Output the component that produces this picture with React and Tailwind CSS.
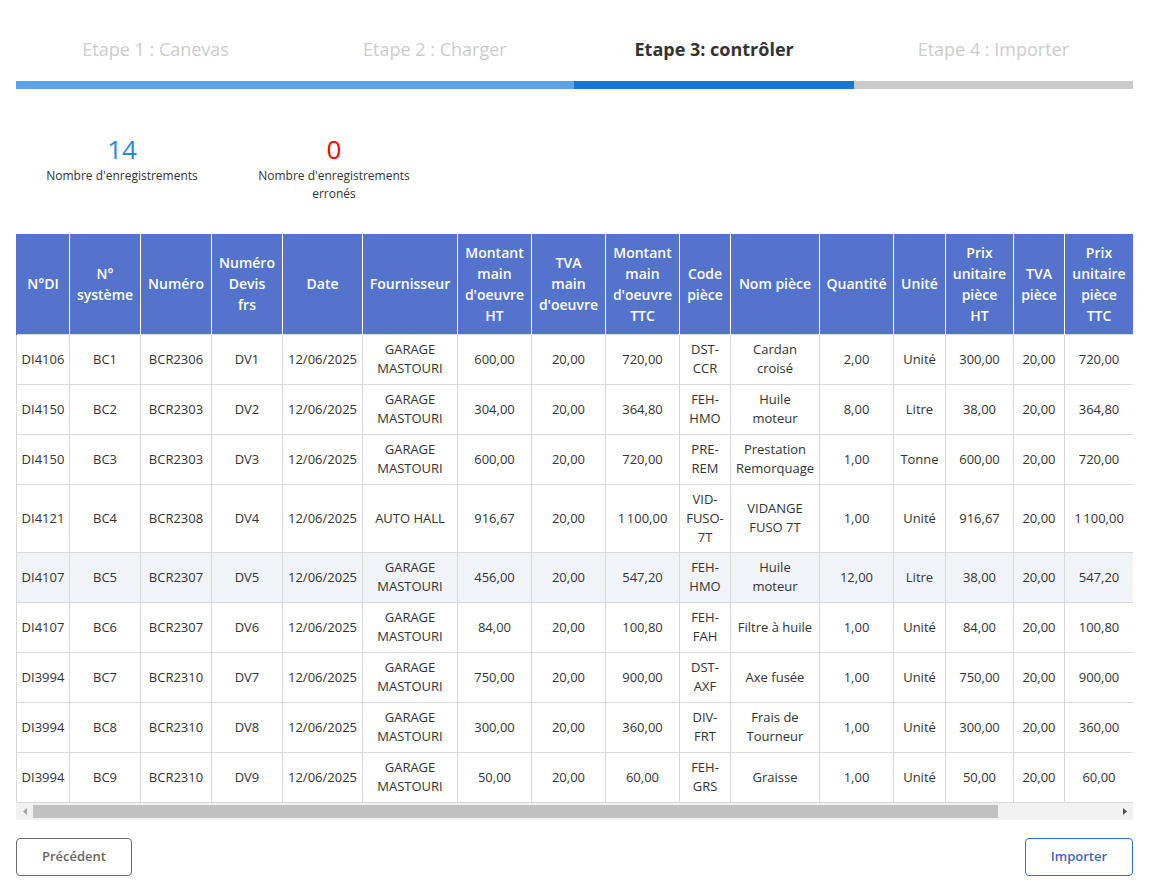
import React from "react";

const steps = [
  { label: "Etape 1 : Canevas", active: false },
  { label: "Etape 2 : Charger", active: false },
  { label: "Etape 3: contrôler", active: true },
  { label: "Etape 4 : Importer", active: false },
];

const columns = [
  { lines: "N°DI", w: 53 },
  { lines: "N°\nsystème", w: 71 },
  { lines: "Numéro", w: 71 },
  { lines: "Numéro\nDevis\nfrs", w: 71 },
  { lines: "Date", w: 80 },
  { lines: "Fournisseur", w: 95 },
  { lines: "Montant\nmain\nd'oeuvre\nHT", w: 74 },
  { lines: "TVA\nmain\nd'oeuvre", w: 74 },
  { lines: "Montant\nmain\nd'oeuvre\nTTC", w: 74 },
  { lines: "Code\npièce", w: 51 },
  { lines: "Nom pièce", w: 89 },
  { lines: "Quantité", w: 74 },
  { lines: "Unité", w: 52 },
  { lines: "Prix\nunitaire\npièce\nHT", w: 68 },
  { lines: "TVA\npièce", w: 51 },
  { lines: "Prix\nunitaire\npièce\nTTC", w: 69 },
];

const G = "GARAGE\nMASTOURI";

const rows = [
  ["DI4106", "BC1", "BCR2306", "DV1", "12/06/2025", G, "600,00", "20,00", "720,00", "DST-\nCCR", "Cardan\ncroisé", "2,00", "Unité", "300,00", "20,00", "720,00"],
  ["DI4150", "BC2", "BCR2303", "DV2", "12/06/2025", G, "304,00", "20,00", "364,80", "FEH-\nHMO", "Huile\nmoteur", "8,00", "Litre", "38,00", "20,00", "364,80"],
  ["DI4150", "BC3", "BCR2303", "DV3", "12/06/2025", G, "600,00", "20,00", "720,00", "PRE-\nREM", "Prestation\nRemorquage", "1,00", "Tonne", "600,00", "20,00", "720,00"],
  ["DI4121", "BC4", "BCR2308", "DV4", "12/06/2025", "AUTO HALL", "916,67", "20,00", "1\u202f100,00", "VID-\nFUSO-\n7T", "VIDANGE\nFUSO 7T", "1,00", "Unité", "916,67", "20,00", "1\u202f100,00"],
  ["DI4107", "BC5", "BCR2307", "DV5", "12/06/2025", G, "456,00", "20,00", "547,20", "FEH-\nHMO", "Huile\nmoteur", "12,00", "Litre", "38,00", "20,00", "547,20"],
  ["DI4107", "BC6", "BCR2307", "DV6", "12/06/2025", G, "84,00", "20,00", "100,80", "FEH-\nFAH", "Filtre à huile", "1,00", "Unité", "84,00", "20,00", "100,80"],
  ["DI3994", "BC7", "BCR2310", "DV7", "12/06/2025", G, "750,00", "20,00", "900,00", "DST-\nAXF", "Axe fusée", "1,00", "Unité", "750,00", "20,00", "900,00"],
  ["DI3994", "BC8", "BCR2310", "DV8", "12/06/2025", G, "300,00", "20,00", "360,00", "DIV-\nFRT", "Frais de\nTourneur", "1,00", "Unité", "300,00", "20,00", "360,00"],
  ["DI3994", "BC9", "BCR2310", "DV9", "12/06/2025", G, "50,00", "20,00", "60,00", "FEH-\nGRS", "Graisse", "1,00", "Unité", "50,00", "20,00", "60,00"],
];

const Stepper = () => (
  <div className="pt-[36px]">
    <div className="grid grid-cols-4">
      {steps.map((s) => (
        <div
          key={s.label}
          className={
            s.active
              ? "text-center text-[18px] leading-[27px] font-bold text-[#333333]"
              : "text-center text-[18px] leading-[27px] text-[#cccccc]"
          }
        >
          {s.label}
        </div>
      ))}
    </div>
    <div className="mt-[18px] flex h-2">
      <div className="w-[558px] bg-[#5ba3e6]" />
      <div className="w-[280px] bg-[#1976d2]" />
      <div className="flex-1 bg-[#cacaca]" />
    </div>
  </div>
);

const Stat = ({ value, label, color }) => (
  <div className="w-[212px] text-center">
    <div className={`text-[26px] leading-[31px] ${color}`}>{value}</div>
    <div className="mx-auto mt-[2px] max-w-[160px] text-[12px] leading-[18px] text-[#333333]">
      {label}
    </div>
  </div>
);

const Scrollbar = () => (
  <div className="flex h-[17px] items-center bg-[#f1f1f1]">
    <div className="flex w-[17px] justify-center">
      <svg width="4" height="7" viewBox="0 0 4 7">
        <path d="M4 0 L0 3.5 L4 7 Z" fill="#a3a3a3" />
      </svg>
    </div>
    <div className="h-[13px] w-[965px] bg-[#c1c1c1]" />
    <div className="flex-1" />
    <div className="flex w-[17px] justify-center">
      <svg width="4" height="7" viewBox="0 0 4 7">
        <path d="M0 0 L4 3.5 L0 7 Z" fill="#505050" />
      </svg>
    </div>
  </div>
);

const DataTable = () => (
  <div className="mt-[31px]">
    <div className="overflow-hidden">
      <table className="w-[1117px] table-fixed border-collapse">
        <colgroup>
          {columns.map((c, i) => (
            <col key={i} style={{ width: c.w }} />
          ))}
        </colgroup>
        <thead>
          <tr className="bg-[#5473cc]">
            {columns.map((c, i) => (
              <th
                key={i}
                className="h-[100px] whitespace-pre border-x border-white px-1 text-center text-[14px] font-semibold leading-[21px] text-white first:border-l-[#5473cc] last:border-r-[#5473cc]"
              >
                {c.lines}
              </th>
            ))}
          </tr>
        </thead>
        <tbody>
          {rows.map((row, r) => (
            <tr
              key={r}
              className={r === 4 ? "bg-[#f0f3f8]" : "bg-white"}
            >
              {row.map((cell, i) => (
                <td
                  key={i}
                  className="h-[50px] whitespace-pre border border-[#d9d9d9] px-1 py-[5px] text-center text-[13px] leading-[19px] text-[#333333]"
                >
                  {cell}
                </td>
              ))}
            </tr>
          ))}
        </tbody>
      </table>
    </div>
    <Scrollbar />
  </div>
);

export default function App() {
  return (
    <div
      className="min-h-screen bg-white pl-4 pr-[19px]"
      style={{ fontFamily: '"Open Sans", "Noto Sans", sans-serif' }}
    >
      <Stepper />
      <div className="mt-[45px] flex">
        <Stat value="14" label="Nombre d'enregistrements" color="text-[#2188e8]" />
        <Stat value="0" label="Nombre d'enregistrements erronés" color="text-[#ff0000]" />
      </div>
      <DataTable />
      <div className="mt-[18px] flex justify-between pb-4">
        <button className="h-[38px] w-[116px] rounded border border-[#6b6b6b] text-[13px] font-semibold text-[#666666]">
          Précédent
        </button>
        <button className="h-[38px] w-[108px] rounded border border-[#2e6fd9] text-[13px] font-semibold text-[#3a68cf]">
          Importer
        </button>
      </div>
    </div>
  );
}
